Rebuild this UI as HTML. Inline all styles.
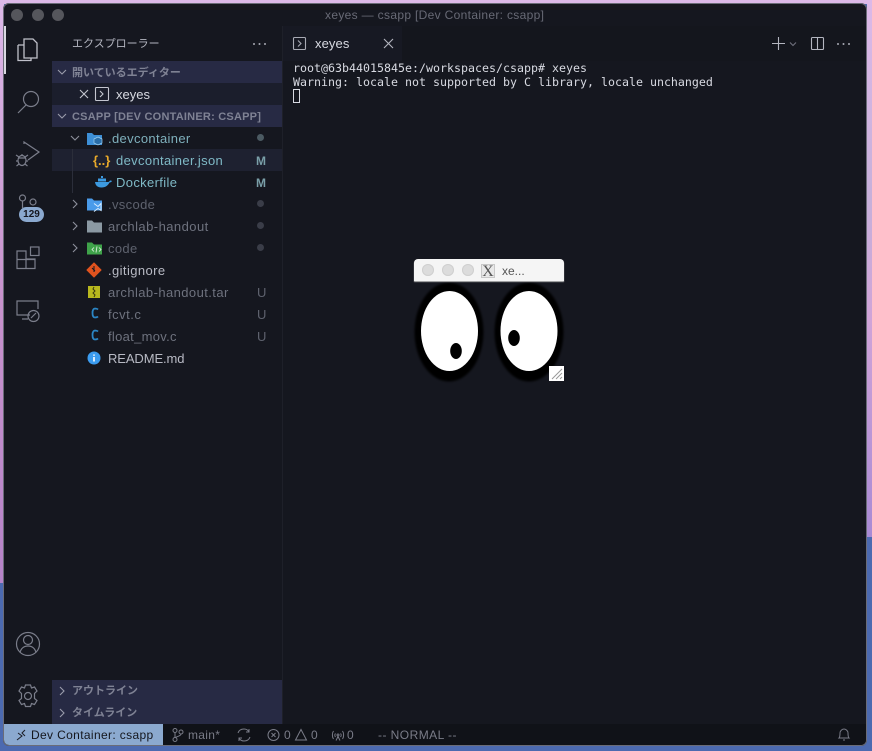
<!DOCTYPE html>
<html><head><meta charset="utf-8">
<style>
html,body{margin:0;padding:0}
body{width:872px;height:751px;position:relative;overflow:hidden;font-family:"Liberation Sans","Noto Sans CJK JP",sans-serif;background:#4c6ab0}
.a{position:absolute;white-space:nowrap}
#win{position:absolute;left:3px;top:3px;width:864px;height:743px;background:#15171f;border-radius:6px;box-shadow:inset 0 0 0 1px #6a6c78;overflow:hidden}
.row{position:absolute;left:52px;width:230px;height:22px;line-height:22px;font-size:13px;letter-spacing:.35px}
.nm{position:absolute;top:1px;white-space:nowrap}
.st{position:absolute;left:204px;top:1px;font-size:12px;font-weight:bold;letter-spacing:0}
.u{left:205px;font-size:13px;font-weight:normal;color:#5e626e}
.dot{position:absolute;left:205px;top:7px;width:7px;height:7px;border-radius:50%;background:#4a5560}
svg{position:absolute;overflow:visible}
.h{position:absolute;left:52px;width:230px;height:22px;background:#272a44;line-height:22px;font-size:11px;font-weight:bold;color:#7f8294}
.s{position:absolute;top:727.500px;font-size:12px;line-height:15px;color:#7a7c88;white-space:nowrap;letter-spacing:.3px}
</style></head><body>
<div class="a" style="left:0;top:0;width:872px;height:4px;background:#dcb9e8"></div>
<div class="a" style="left:0;top:0;width:4px;height:583px;background:linear-gradient(180deg,#dcb9e8 0,#c792cc 300px,#b583c8 583px)"></div>
<div class="a" style="left:867px;top:0;width:5px;height:537px;background:linear-gradient(180deg,#dcb9e8 0,#c7b0da 200px,#d0a4d8 320px,#a88ad4 537px)"></div>
<div id="win"></div>

<!-- title -->
<div class="a" style="left:11px;top:9px;width:12px;height:12px;border-radius:50%;background:#55565c"></div>
<div class="a" style="left:32px;top:9px;width:12px;height:12px;border-radius:50%;background:#55565c"></div>
<div class="a" style="left:52px;top:9px;width:12px;height:12px;border-radius:50%;background:#55565c"></div>
<div class="a" style="left:325px;top:8px;font-size:12px;line-height:14px;color:#686a76;letter-spacing:.33px">xeyes — csapp [Dev Container: csapp]</div>

<!-- panels -->
<div class="a" style="left:282px;top:26px;width:1px;height:698px;background:#1e2029"></div>
<div class="a" style="left:283px;top:26px;width:583px;height:35px;background:#14161d"></div>
<div class="a" style="left:283px;top:26px;width:119px;height:35px;background:#171923"></div>

<!-- activity bar -->
<div class="a" style="left:4px;top:26px;width:2px;height:48px;background:#d8d8e0"></div>
<svg style="left:0;top:0" width="52" height="751" fill="none" stroke="#7b7e8b" stroke-width="1.200">
<path d="M24 39h9l4 4v15H24z M18 45h6 M18 45v15.500h13v-2.500" stroke="#c0c1ca" stroke-width="1.300"/>
<circle cx="31" cy="99" r="7.500"/><path d="M26 105l-8 8"/>
<path d="M24 144v-2l15 10-11 8"/>
<ellipse cx="22" cy="160.500" rx="4" ry="5"/><path d="M18 158h8M16 155l3 2M16 161h2M16.500 166l2.500-2M28 155l-3 2M28 161h-2M27.500 166l-2.500-2M22 155v-1"/>
<circle cx="22.500" cy="198" r="3"/><circle cx="33" cy="202" r="3"/><path d="M22.500 201v7"/>
<path d="M17 251h9v8h9v9.500H17z M17 259.500h18 M26 259v9.500"/><rect x="30.500" y="247" width="8.500" height="8.500"/>
<path d="M30 315H17v-14h21v8M22 319h6"/><circle cx="33.500" cy="316" r="5.500"/><path d="M31 318l5-5"/>
<circle cx="28" cy="644" r="11.500"/><circle cx="28" cy="640" r="4.500"/><path d="M20 652.500c1-4 4-6.500 8-6.500s7 2.500 8 6.500"/>
<circle cx="28" cy="696" r="3.500"/>
<path d="M25.500 685h5l1 3 3-1 2.500 4-2.500 2.500v5l2.500 2-2.500 4-3-1-1 3h-5l-1-3-3 1-2.500-4 2.500-2v-5l-2.500-2.500 2.500-4 3 1z"/>
</svg>
<div class="a" style="left:19px;top:207px;width:25px;height:15px;border-radius:7.500px;background:#8ba9cf;color:#15171f;font-size:10px;font-weight:bold;line-height:15px;text-align:center">129</div>

<!-- sidebar -->
<div class="a" style="left:72px;top:36px;font-size:11px;line-height:16px;color:#b4b6c0">エクスプローラー</div>
<svg style="left:0;top:0" width="872" height="62"><g fill="#a8aab4"><circle cx="254" cy="44" r="1"/><circle cx="259.500" cy="44" r="1"/><circle cx="265" cy="44" r="1"/><circle cx="838" cy="44" r="1"/><circle cx="843.500" cy="44" r="1"/><circle cx="849" cy="44" r="1"/></g></svg>

<div class="h" style="top:61px"><span class="nm" style="left:20px">開いているエディター</span></div>
<div class="row" style="top:83px;background:#1b1e2c;color:#d8dae2;letter-spacing:0"><span class="nm" style="left:64px">xeyes</span></div>
<div class="h" style="top:105px;letter-spacing:.22px"><span class="nm" style="left:20px">CSAPP [DEV CONTAINER: CSAPP]</span></div>
<svg style="left:0;top:0" width="282" height="751" fill="none" stroke="#9a9cab" stroke-width="1.100">
<path d="M58 70l4 4 4-4M58 114l4 4 4-4"/>
<path d="M80 90l8 8M88 90l-8 8" stroke="#c4c6d0"/>
<rect x="95.500" y="87.500" width="13" height="13" rx="1" stroke="#c4c6d0"/><path d="M100 91l3 3-3 3" stroke="#c4c6d0"/>
</svg>

<div class="row" style="top:127px;color:#7fb0bc"><span class="nm" style="left:56px">.devcontainer</span><span class="dot" style="background:#4b5a62"></span></div>
<div class="row" style="top:149px;background:#1e2130;color:#7fb9c6"><span class="nm" style="left:64px">devcontainer.json</span><span class="st" style="color:#7a9fa8">M</span></div>
<div class="row" style="top:171px;color:#7fb9c6"><span class="nm" style="left:64px">Dockerfile</span><span class="st" style="color:#7a9fa8">M</span></div>
<div class="row" style="top:193px;color:#5e626e"><span class="nm" style="left:56px">.vscode</span><span class="dot" style="background:#3a3d48"></span></div>
<div class="row" style="top:215px;color:#6e727e;letter-spacing:.45px"><span class="nm" style="left:56px">archlab-handout</span><span class="dot" style="background:#3a3d48"></span></div>
<div class="row" style="top:237px;color:#5e626e"><span class="nm" style="left:56px">code</span><span class="dot" style="background:#3a3d48"></span></div>
<div class="row" style="top:259px;color:#b8bac4;letter-spacing:.4px"><span class="nm" style="left:56px">.gitignore</span></div>
<div class="row" style="top:281px;color:#6e727e;letter-spacing:.42px"><span class="nm" style="left:56px">archlab-handout.tar</span><span class="st u">U</span></div>
<div class="row" style="top:303px;color:#6e727e;letter-spacing:.5px"><span class="nm" style="left:56px">fcvt.c</span><span class="st u">U</span></div>
<div class="row" style="top:325px;color:#6e727e;letter-spacing:.3px"><span class="nm" style="left:56px">float_mov.c</span><span class="st u">U</span></div>
<div class="row" style="top:347px;color:#b8bac4;letter-spacing:-.1px"><span class="nm" style="left:56px">README.md</span></div>

<div class="a" style="left:72px;top:149px;width:1px;height:44px;background:#2b2e3a"></div>

<svg style="left:0;top:0" width="282" height="400" fill="none" stroke="#8d909c" stroke-width="1.100">
<path d="M71 136l4 4 4-4"/>
<path d="M73 200l4 4-4 4M73 222l4 4-4 4M73 244l4 4-4 4"/>
<!-- folders -->
<path d="M87 133h5l2 2h8v10H87z" fill="#3d8fd6" stroke="none"/><path d="M98 137l4 2v4l-4 2-4-2v-4z" fill="#2a6ea8" stroke="#9fd0f0" stroke-width=".7"/>
<path d="M87 198.500h5l2 2h8v10H87z" fill="#4a9bea" stroke="none"/><path d="M94 203.500l4 3 3-3v7l-3-2-4 3" stroke="#d8ecff" stroke-width="1"/>
<path d="M87 220.500h5l2 2h8v10H87z" fill="#8b99a3" stroke="none"/>
<path d="M87 242.500h5l2 2h8v10H87z" fill="#3fa34a" stroke="none"/><path d="M94 247.500l-2 2 2 2M99 247.500l2 2-2 2M97 246.500l-1 6" stroke="#e8f5e8" stroke-width=".8"/>
<!-- json -->
<text x="93" y="165" font-family="Liberation Sans" font-size="13" fill="#e8a92a" stroke="none" font-weight="bold">{..}</text>
<!-- docker -->
<path d="M95 182h13c1 0 1.500-1 2-1.500 .5 0 1.500 0 2 .5-.5 1-1.500 1.500-2.500 1.500-1.500 3-4 5-8 5-4 0-6-2-6.500-5.500z" fill="#3c9ae0" stroke="none"/>
<path d="M98 178.500h8v3h-8zM101 176h2v2h-2z" fill="#3c9ae0" stroke="none"/>
<!-- git -->
<path d="M94 263l7 7-7 7-7-7z" fill="#e0531f" stroke="#e0531f" stroke-linejoin="round"/><path d="M92 268l3 3M94 266v6" stroke="#15171f" stroke-width="1"/>
<!-- tar -->
<rect x="88" y="286" width="12" height="12" fill="#b8b81e" stroke="none"/><path d="M94 287l-1 2 2 2-2 2 2 2-1 2" stroke="#3a3a10" stroke-width="1"/>
<!-- C -->
<path d="M98 309.500c-1-1-2-1-3-1-2 .2-2.500 2.500-2.500 4.500s.5 4.500 2.500 4.500c1 0 2 0 3-1" stroke="#2b86c5" stroke-width="1.800"/>
<path d="M98 331.500c-1-1-2-1-3-1-2 .2-2.500 2.500-2.500 4.500s.5 4.500 2.500 4.500c1 0 2 0 3-1" stroke="#2b86c5" stroke-width="1.800"/>
<!-- info -->
<circle cx="94" cy="358" r="6.500" fill="#3b9cf0" stroke="none"/><path d="M94 357v4.500M94 354.500v1.200" stroke="#fff" stroke-width="1.600"/>
</svg>

<!-- bottom panels -->
<div class="h" style="top:680px;height:44px"></div>
<div class="a" style="left:72px;top:682px;font-size:11px;line-height:18px;font-weight:bold;color:#7f8294">アウトライン</div>
<div class="a" style="left:72px;top:704px;font-size:11px;line-height:18px;font-weight:bold;color:#7f8294">タイムライン</div>
<svg style="left:0;top:0" width="282" height="751" fill="none" stroke="#9a9cab" stroke-width="1.100"><path d="M60 687l4 4-4 4M60 709l4 4-4 4"/></svg>

<!-- tab -->
<svg style="left:0;top:0" width="872" height="62" fill="none" stroke="#a8aab4" stroke-width="1.100">
<rect x="293.500" y="37.500" width="12" height="12" rx="1"/><path d="M298 40.500l3 3-3 3"/>
<path d="M384 39l9 9M393 39l-9 9" stroke="#b4b6c0"/>
<path d="M772 43.500h13M778.500 37v13" stroke="#b4b6c0"/>
<path d="M790 42.500l3 3 3-3" stroke="#70727e"/>
<rect x="811.500" y="37.500" width="12" height="12" rx="1" stroke="#b4b6c0"/><path d="M817.500 37.500v12" stroke="#b4b6c0"/>
</svg>
<div class="a" style="left:315px;top:36px;font-size:13px;line-height:16px;color:#d8dae2;letter-spacing:.1px">xeyes</div>

<!-- terminal -->
<div class="a" style="left:293px;top:61px;font-family:'DejaVu Sans Mono',monospace;font-size:11.630px;line-height:14px;color:#d8dae2;white-space:pre">root@63b44015845e:/workspaces/csapp# xeyes
Warning: locale not supported by C library, locale unchanged</div>
<div class="a" style="left:293px;top:89px;width:5px;height:12px;border:1px solid #d8dae2"></div>

<!-- xeyes -->
<svg style="left:414px;top:281px" width="151" height="102">
<defs><filter id="b" x="-10%" y="-10%" width="120%" height="120%"><feGaussianBlur stdDeviation="1"/></filter></defs>
<ellipse cx="35" cy="51" rx="34.500" ry="49.500" fill="#000" filter="url(#b)"/><ellipse cx="35.500" cy="50" rx="28.500" ry="40" fill="#fff"/>
<ellipse cx="115" cy="51" rx="34.500" ry="49.500" fill="#000" filter="url(#b)"/><ellipse cx="115" cy="50" rx="28.500" ry="40" fill="#fff"/>
<ellipse cx="42" cy="70" rx="5.800" ry="8" fill="#000"/><ellipse cx="100" cy="57" rx="5.800" ry="8" fill="#000"/>
<rect x="135" y="85" width="15" height="15" fill="#fff"/>
<path d="M138 98l10-10M142 98l6-6M146 98l2-2" stroke="#999" stroke-width="1" fill="none"/>
</svg>
<div class="a" style="left:414px;top:259px;width:150px;height:22px;background:#f5f5f5;border-radius:4px 4px 0 0;box-shadow:0 1px 1px #bbb"></div>
<div class="a" style="left:422px;top:264px;width:12px;height:12px;border-radius:50%;background:#dcdcdc;box-shadow:inset 0 0 0 1px #d0d0d0"></div>
<div class="a" style="left:442px;top:264px;width:12px;height:12px;border-radius:50%;background:#dcdcdc;box-shadow:inset 0 0 0 1px #d0d0d0"></div>
<div class="a" style="left:462px;top:264px;width:12px;height:12px;border-radius:50%;background:#dcdcdc;box-shadow:inset 0 0 0 1px #d0d0d0"></div>
<div class="a" style="left:481px;top:264px;width:12px;height:12px;border:1px solid #c8c8c8;background:#e8e8e8;font-family:'Liberation Serif',serif;font-size:16px;line-height:13px;text-align:center;color:#555;overflow:hidden">X</div>
<div class="a" style="left:502px;top:264px;font-size:12px;line-height:15px;color:#555">xe...</div>

<!-- status bar -->
<div class="a" style="left:4px;top:724px;width:862px;height:21px;background:#101218;border-radius:0 0 5px 5px"></div>
<div class="a" style="left:4px;top:724px;width:159px;height:21px;background:#8ba9cf;border-radius:0 0 0 5px"></div>
<svg style="left:0;top:0" width="872" height="751" fill="none" stroke="#7a7c88" stroke-width="1">
<path d="M17 740l5-4-4-3M25 730l-3 3 3 3" stroke="#1a1c24"/>
<circle cx="175" cy="730.500" r="2"/><circle cx="175" cy="739.500" r="2"/><circle cx="181" cy="732" r="2"/><path d="M175 732.500v5M181 734c0 2-3 2-5.500 3.500"/>
<path d="M238 733c1-3 3-4 6-4 2 0 4 1 5 3M250 737c-1 3-3 4-6 4-2 0-4-1-5-3M249 729v3h-3M239 741v-3h3"/>
<circle cx="273.500" cy="735" r="5.500"/><path d="M271.500 733l4 4M275.500 733l-4 4"/>
<path d="M301 729.500l5.500 10.500h-11z"/>
<path d="M338 736.500l-2 4M338 736.500l2 4M335.500 733.500c-1 1-.8 2.500 0 3.500M340.500 733.500c1 1 .8 2.500 0 3.500M333.500 731c-1.500 2-1.500 6 0 8M342.500 731c1.500 2 1.500 6 0 8"/>
<circle cx="338" cy="735" r="1"/>
<path d="M839 738c1-1 1-3 1-5 0-2 2-4 4-4s4 2 4 4c0 2 0 4 1 5zM843 740h2"/>
</svg>
<div class="s" style="left:31px;color:#14161d;letter-spacing:.36px">Dev Container: csapp</div>
<div class="s" style="left:188px">main*</div>
<div class="s" style="left:284px">0</div>
<div class="s" style="left:311px">0</div>
<div class="s" style="left:347px">0</div>
<div class="s" style="left:378px;letter-spacing:.45px">-- NORMAL --</div>
</body></html>
